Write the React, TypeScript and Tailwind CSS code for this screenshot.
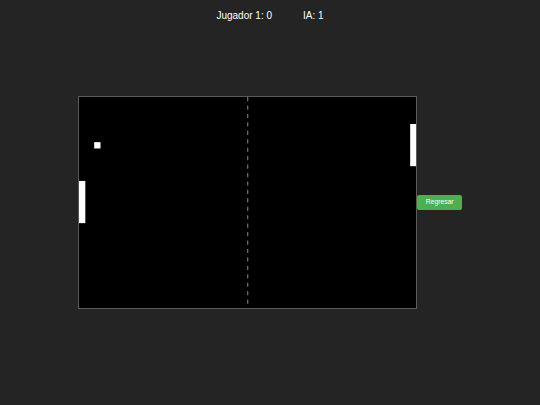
import * as React from 'react'

// original game runs at 800x500, shown here at 0.421875 scale
const SCALE = 0.421875

function Field() {
  return (
    <div className="border border-[#5a5a5a] bg-black">
      <svg
        width={800 * SCALE}
        height={500 * SCALE}
        viewBox="0 0 800 500"
        className="block"
      >
        <line
          x1="400"
          y1="0"
          x2="400"
          y2="500"
          stroke="#8a8a8a"
          strokeWidth="2.4"
          strokeDasharray="10 10"
        />
        {/* Left paddle */}
        <rect x="0" y="199" width="15" height="100" fill="#fff" />
        {/* Right paddle */}
        <rect x="785" y="64" width="15" height="100" fill="#fff" />
        {/* Ball */}
        <rect x="36" y="107" width="15" height="15" fill="#fff" />
      </svg>
    </div>
  )
}

export default function App() {
  return (
    <div
      className="flex h-[405px] w-full flex-col items-center bg-[#242424] text-white"
      style={{ fontFamily: '"Liberation Sans", Arial, sans-serif' }}
    >
      <div className="flex pt-[10px] text-[10px] leading-[12px]">
        <span className="mx-[15.5px]">Jugador 1: 0</span>
        <span className="mx-[15.5px]">IA: 1</span>
      </div>

      <div className="mt-[74px] flex items-center">
        <Field />
        <button className="h-[15px] cursor-pointer rounded-[2px] bg-[#4caf50] px-[8.5px] text-[6.75px] leading-none text-white">
          Regresar
        </button>
      </div>
    </div>
  )
}
